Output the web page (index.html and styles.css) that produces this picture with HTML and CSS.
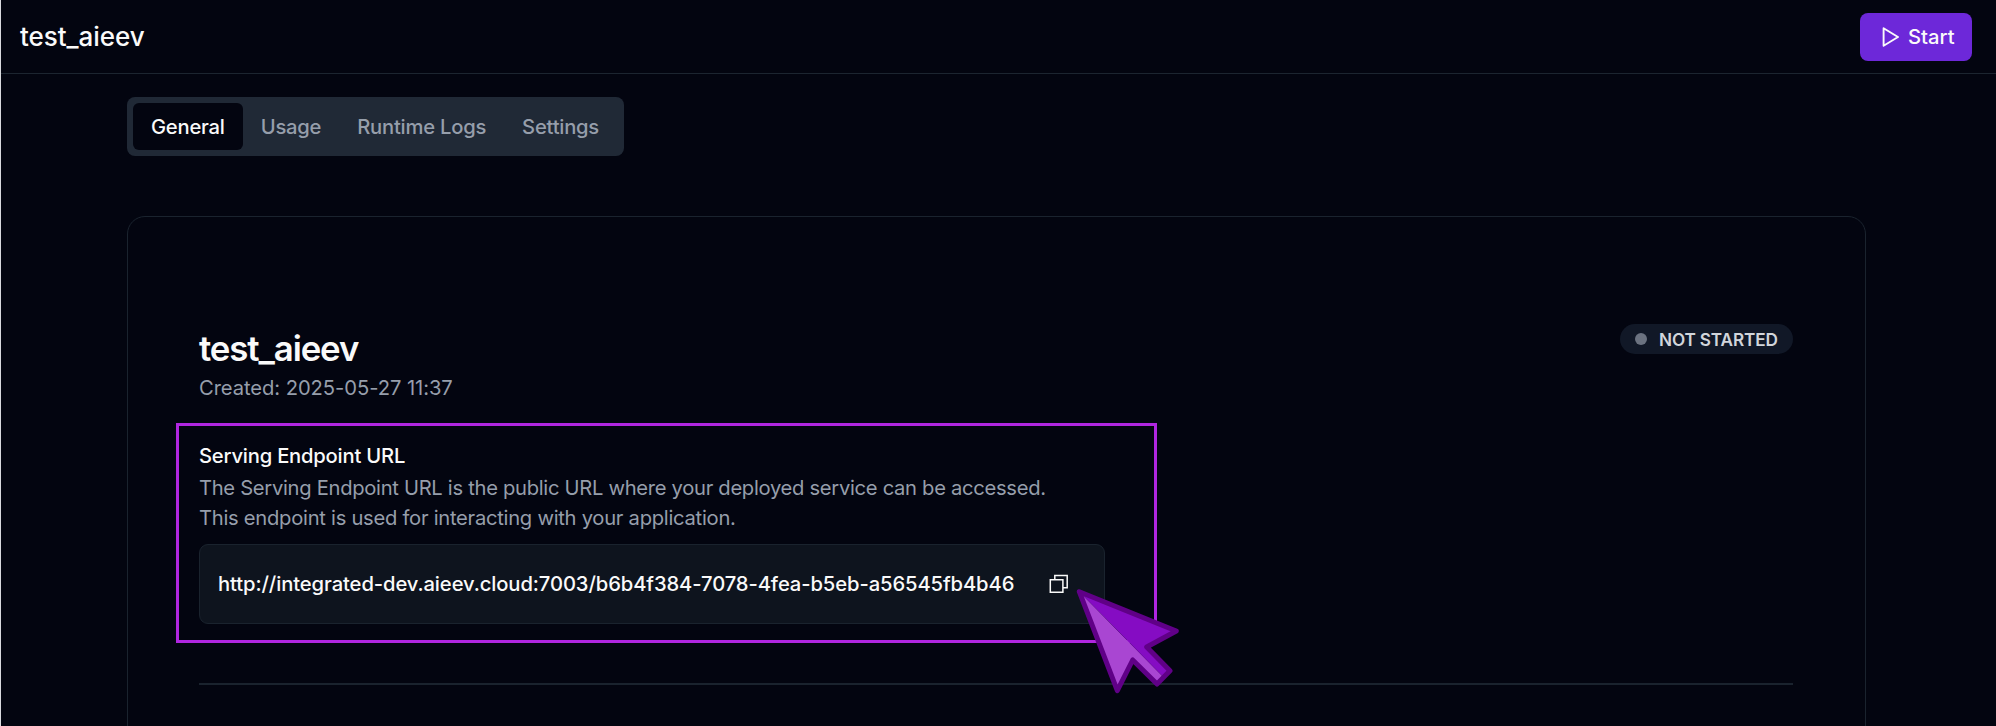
FILE: index.html
```html
<!DOCTYPE html>
<html lang="en">
<head>
<meta charset="utf-8">
<title>test_aieev</title>
<link rel="stylesheet" href="styles.css">
</head>
<body>
<div class="app">
  <header class="topbar">
    <h1 class="topbar-title">test_aieev</h1>
    <button class="start" type="button">
      <svg class="start-icon" viewBox="0 0 18 20" fill="none" stroke="currentColor" stroke-width="1.9" stroke-linejoin="round"><path d="M1.6 1.2 16 10 1.6 18.8Z"/></svg>
      <span class="start-label">Start</span>
    </button>
  </header>
  <main class="content">
    <nav class="tabs">
      <a class="tab tab-active"><span>General</span></a>
      <a class="tab"><span>Usage</span></a>
      <a class="tab"><span>Runtime Logs</span></a>
      <a class="tab"><span>Settings</span></a>
    </nav>
    <section class="card">
      <div class="card-head">
        <div>
          <h2 class="card-title">test_aieev</h2>
          <p class="created">Created: 2025-05-27 11:37</p>
        </div>
        <div class="status"><i class="status-dot"></i><span class="status-label">NOT STARTED</span></div>
      </div>
      <div class="endpoint">
        <h3 class="endpoint-title">Serving Endpoint URL</h3>
        <p class="endpoint-text">The Serving Endpoint URL is the public URL where your deployed service can be accessed.<br><span class="line-two">This endpoint is used for interacting with your application.</span></p>
        <div class="url-box">
          <span class="url">http://integrated-dev.aieev.cloud:7003/b6b4f384-7078-4fea-b5eb-a56545fb4b46</span>
          <svg class="copy" viewBox="0 0 20 20" fill="none" stroke="currentColor" stroke-width="1.5"><path d="M1.3 5.8h12.6v12.4H1.3zM5.8 5.8V1.6h12.4v12.2h-4.3"/></svg>
        </div>
        <svg class="cursor" viewBox="0 0 104 106">
          <path fill="#a946d2" d="M3.3 3.7 41.3 102.7 56.7 72 81 96 87.5 89.3Z"/>
          <path fill="#850cc3" d="M3.3 3.7 100.3 43 70.7 59 94 82.7 87.5 89.3Z"/>
          <path fill="none" stroke="#600087" stroke-width="5" stroke-linejoin="round" d="M3.3 3.7 100.3 43 70.7 59 94 82.7 81 96 56.7 72 41.3 102.7Z"/>
        </svg>
      </div>
      <hr class="divider">
    </section>
  </main>
</div>
</body>
</html>
```
FILE: styles.css
```css
* { box-sizing: border-box; }
body {
  margin: 0;
  background: #030510;
  color: #fafafa;
  font-family: Inter, "Liberation Sans", sans-serif;
  font-size: 20.2px;
  overflow: hidden;
}
h1, h2, h3, p { margin: 0; }
.app { height: 726px; border-left: 1px solid #d9dade; overflow: hidden; }
.topbar {
  display: flex;
  align-items: center;
  justify-content: space-between;
  height: 74px;
  padding: 0 24px 0 19px;
  border-bottom: 1px solid #1c2530;
}
.topbar-title { font-size: 26px; font-weight: 550; line-height: 36px; letter-spacing: -0.05px; }
.start {
  display: flex;
  align-items: center;
  gap: 8px;
  width: 112px;
  height: 48px;
  padding: 0 0 0 22px;
  border: 0;
  border-radius: 8px;
  background: #6d28d9;
  color: #fafafa;
  font: 500 20.2px/30px Inter, "Liberation Sans", sans-serif;
}
.start-icon { width: 18px; height: 20px; }
.content { padding: 23px 130px 0 126px; }
.tabs {
  display: flex;
  width: 497px;
  height: 59px;
  padding: 6px;
  border-radius: 8px;
  background: #202936;
  color: #969eab;
  font-weight: 500;
  letter-spacing: -0.22px;
}
.tab { display: flex; align-items: center; padding: 0 18px; white-space: nowrap; border-radius: 6px; }
.tab-active { background: #030510; color: #fafafa; }
.card {
  height: 600px;
  margin-top: 60px;
  padding: 107px 72px 0 71px;
  border: 1px solid #1a232e;
  border-radius: 18px;
}
.card-head { display: flex; justify-content: space-between; align-items: flex-start; }
.card-title { margin-bottom: 1px; font-size: 34.8px; font-weight: 620; line-height: 48px; letter-spacing: -1.1px; }
.created { line-height: 30px; letter-spacing: -0.07px; color: #969eab; }
.status {
  display: flex;
  align-items: center;
  width: 173px;
  height: 30px;
  padding-left: 15px;
  border-radius: 15px;
  background: #111827;
  color: #d1d5db;
  font-size: 17.2px;
  font-weight: 600;
  letter-spacing: -0.15px;
}
.status-dot { width: 12px; height: 12px; margin-right: 12px; border-radius: 50%; background: #6b7280; }
.status-label { white-space: nowrap; }
.endpoint {
  position: relative;
  width: 981px;
  height: 220px;
  margin: 20px 0 0 -23px;
  padding: 15px 20px;
  border: 3px solid #b026e0;
}
.endpoint-title { font-size: 20.2px; font-weight: 500; line-height: 30px; letter-spacing: -0.2px; }
.endpoint-text { margin-top: 2px; line-height: 30px; letter-spacing: -0.3px; color: #969eab; white-space: nowrap; }
.line-two { letter-spacing: -0.27px; }
.url-box {
  display: flex;
  align-items: center;
  justify-content: space-between;
  width: 906px;
  height: 80px;
  margin-top: 11px;
  padding: 0 35px 2px 18px;
  border: 1px solid #1a232e;
  border-radius: 9px;
  background: #0e141e;
  font-weight: 500;
}
.url { white-space: nowrap; letter-spacing: -0.09px; }
.copy { width: 20px; height: 20px; margin-top: 2px; flex: none; }
.cursor { position: absolute; left: 897px; top: 162px; width: 104px; height: 106px; }
.divider { margin: 40px 0 0; border: 0; height: 2px; background: #1a232e; }
```
